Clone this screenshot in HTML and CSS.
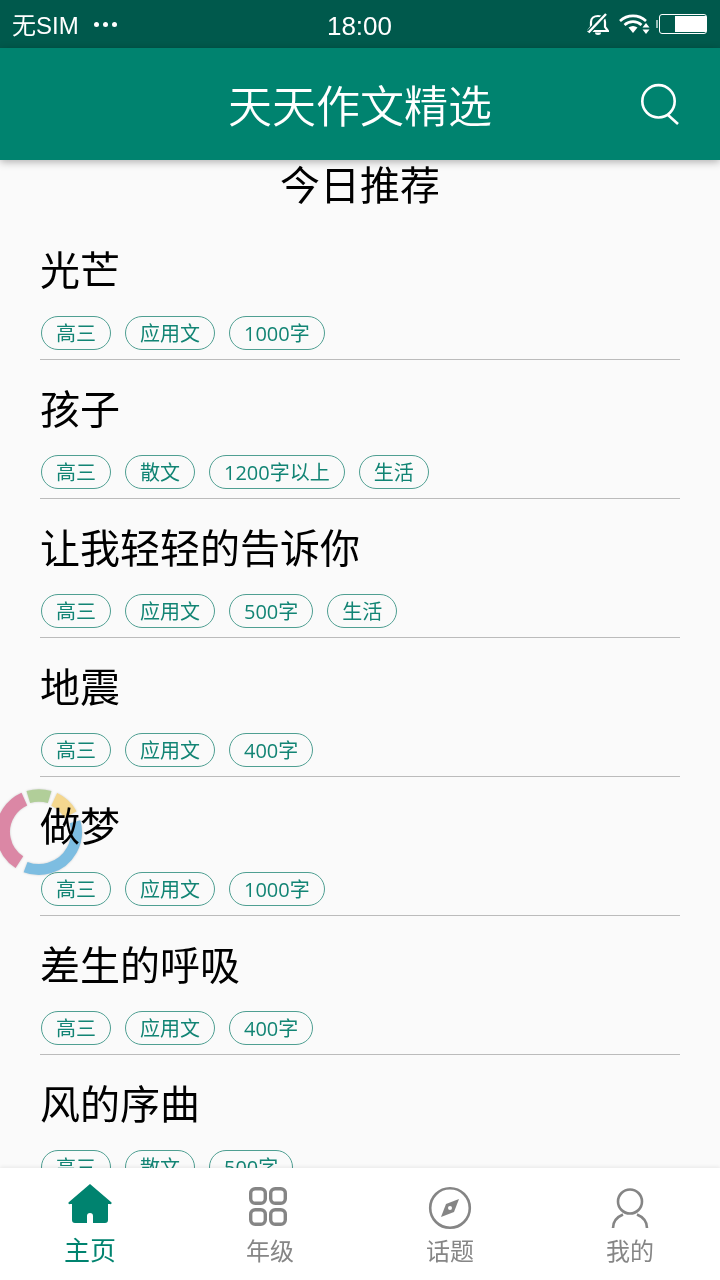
FILE: index.html
```html
<!DOCTYPE html>
<html lang="zh-CN">
<head>
<meta charset="utf-8">
<title>天天作文精选</title>
<link rel="stylesheet" href="styles.css">
</head>
<body>
<div class="page">
  <div class="status-bar">
    <div class="status-left"><span class="carrier">无SIM</span><span class="dots"><i></i><i></i><i></i></span></div>
    <div class="status-time">18:00</div>
    <div class="status-right">
      <svg class="ic-bell" viewBox="0 0 22 22"><path d="M1 18h20l-3-4V9c0-3.500-3-6-7-6S4 5.500 4 9v5z" fill="none" stroke="#fff" stroke-width="2.200"/><path d="M8 19.500h6a3 2.500 0 0 1-6 0z" fill="#fff"/><path d="M1.500 19.500 19 1" stroke="#00594c" stroke-width="5"/><path d="M1.500 19.500 19 1" stroke="#fff" stroke-width="2.400"/></svg>
      <svg class="ic-wifi" viewBox="0 0 31 20"><g fill="none" stroke="#fff" stroke-width="2.600"><path d="M1 7a19 19 0 0 1 26 0"/><path d="M5.500 11a12.500 12.500 0 0 1 17 0"/></g><path d="M9.500 13.500a8 8 0 0 1 9 0L14 19z" fill="#fff"/><path d="M27 9l3.500 4.500h-7zM27 20l3.500-4.500h-7z" fill="#fff"/></svg>
      <div class="battery-wrap"><span class="nub"></span><div class="battery"><div class="battery-fill"></div></div></div>
    </div>
  </div>
  <header class="app-header">
    <h1 class="app-title">天天作文精选</h1>
    <svg class="ic-search" viewBox="0 0 40 42"><circle cx="19.500" cy="18.300" r="16.200" fill="none" stroke="#fff" stroke-width="2.600"/><path d="M29 32l10 9" stroke="#fff" stroke-width="2.600" fill="none"/></svg>
  </header>
  <main class="content">
    <h2 class="section-title">今日推荐</h2>
    <article class="item"><h3 class="item-title">光芒</h3><div class="tags"><span class="tag">高三</span><span class="tag">应用文</span><span class="tag">1000字</span></div></article>
    <article class="item"><h3 class="item-title">孩子</h3><div class="tags"><span class="tag">高三</span><span class="tag">散文</span><span class="tag">1200字以上</span><span class="tag">生活</span></div></article>
    <article class="item"><h3 class="item-title">让我轻轻的告诉你</h3><div class="tags"><span class="tag">高三</span><span class="tag">应用文</span><span class="tag">500字</span><span class="tag">生活</span></div></article>
    <article class="item"><h3 class="item-title">地震</h3><div class="tags"><span class="tag">高三</span><span class="tag">应用文</span><span class="tag">400字</span></div></article>
    <article class="item"><h3 class="item-title">做梦</h3><div class="tags"><span class="tag">高三</span><span class="tag">应用文</span><span class="tag">1000字</span></div></article>
    <article class="item"><h3 class="item-title">差生的呼吸</h3><div class="tags"><span class="tag">高三</span><span class="tag">应用文</span><span class="tag">400字</span></div></article>
    <article class="item"><h3 class="item-title">风的序曲</h3><div class="tags"><span class="tag">高三</span><span class="tag">散文</span><span class="tag">500字</span></div></article>
  </main>
  <nav class="tabbar">
    <div class="tab active">
      <svg class="tab-icon" viewBox="0 0 44 44"><path d="M22 1 43 19a1 1 0 0 1-1 2h-2v16a3 3 0 0 1-3 3H25V33a3 3 0 0 0-6 0v7H7a3 3 0 0 1-3-3V21H2a1 1 0 0 1-1-2z" fill="#00836f"/></svg>
      <span class="tab-label">主页</span>
    </div>
    <div class="tab">
      <svg class="tab-icon" viewBox="0 0 44 44"><g fill="none" stroke="#858585" stroke-width="3.400"><rect x="2.700" y="5.700" width="14.600" height="14.600" rx="4.500"/><rect x="22.700" y="5.700" width="14.600" height="14.600" rx="4.500"/><rect x="2.700" y="26.700" width="14.600" height="14.600" rx="4.500"/><rect x="22.700" y="26.700" width="14.600" height="14.600" rx="4.500"/></g></svg>
      <span class="tab-label">年级</span>
    </div>
    <div class="tab">
      <svg class="tab-icon" viewBox="0 0 44 44"><circle cx="22" cy="25" r="19.800" fill="none" stroke="#858585" stroke-width="2.600"/><path d="M31 16 26 29 13 34 18 21z" fill="#858585"/><circle cx="22" cy="25" r="2" fill="#fff"/></svg>
      <span class="tab-label">话题</span>
    </div>
    <div class="tab">
      <svg class="tab-icon" viewBox="0 0 44 44"><g fill="none" stroke="#858585" stroke-width="2.600"><circle cx="22" cy="18.500" r="12"/><path d="M5 45c0-6 4-11 10-13.500M39 45c0-6-4-11-10-13.500"/></g></svg>
      <span class="tab-label">我的</span>
    </div>
  </nav>
  <svg class="float-ring" viewBox="-45 -45 90 90">
    <g fill="none">
      <circle r="36" stroke-width="14" pathLength="360" stroke="#e08aa8" stroke-dasharray="123 237" transform="rotate(123)"/>
      <circle r="36.500" stroke-width="12.500" pathLength="360" stroke="#b5d29c" stroke-dasharray="34 326" transform="rotate(253)"/>
      <circle r="36" stroke-width="14" pathLength="360" stroke="#f9dc92" stroke-dasharray="36 324" transform="rotate(295)"/>
      <circle r="37.500" stroke-width="11" pathLength="360" stroke="#80c1e6" stroke-dasharray="127 233" transform="rotate(344)"/>
    </g>
  </svg>
</div>
</body>
</html>
```
FILE: styles.css
```css
* { box-sizing: border-box; }
html, body { margin: 0; padding: 0; }
body {
  font-family: "Noto Sans CJK SC", "Noto Sans", sans-serif;
  background: #fafafa;
}
.page {
  position: relative;
  width: 720px;
  height: 1280px;
  display: flex;
  flex-direction: column;
  overflow: hidden;
}
.status-bar {
  height: 48px;
  flex: none;
  background: #00594c;
  color: #fff;
  display: grid;
  grid-template-columns: 1fr auto 1fr;
  align-items: center;
  padding: 0 13px 0 12px;
  font-family: "Liberation Sans", "Noto Sans CJK SC", sans-serif;
}
.status-left {
  display: flex;
  align-items: center;
  gap: 15px;
  font-size: 24px;
  line-height: 48px;
}
.carrier { line-height: 52px; height: 48px; }
.dots { display: flex; gap: 4px; }
.dots i { width: 5px; height: 5px; border-radius: 50%; background: #fff; }
.status-time { font-size: 26px; line-height: 52px; height: 48px; }
.status-right {
  display: flex;
  align-items: center;
  justify-content: flex-end;
  gap: 9px;
}
.ic-bell { width: 22px; height: 22px; margin-right: 1px; }
.ic-wifi { width: 31px; height: 20px; }
.battery-wrap { display: flex; align-items: center; gap: 1px; }
.nub { width: 2px; height: 8px; background: rgba(255,255,255,.6); margin-left: -3px; }
.battery {
  width: 48px;
  height: 20px;
  border: 1px solid #fff;
  border-radius: 3px;
  display: flex;
  justify-content: flex-end;
  padding: 1px 0;
}
.battery-fill { width: 31px; background: #fff; }
.app-header {
  position: relative;
  z-index: 2;
  height: 112px;
  flex: none;
  background: #00836f;
  box-shadow: 0 2px 8px rgba(0,0,0,.3);
  display: flex;
  align-items: center;
  justify-content: center;
}
.app-title {
  margin: 0;
  color: #fff;
  font-size: 44px;
  font-weight: 350;
  line-height: 112px;
}
.ic-search {
  position: absolute;
  right: 41px;
  top: 35px;
  width: 40px;
  height: 42px;
}
.content {
  flex: 1;
  min-height: 0;
  overflow: hidden;
}
.section-title {
  margin: 0 0 15px;
  height: 46px;
  font-size: 40px;
  font-weight: 400;
  line-height: 46px;
  text-align: center;
  color: #000;
}
.item {
  margin: 0 40px;
  padding: 21px 0 9px;
  border-bottom: 1px solid #bbbbbb;
}
.item-title {
  margin: 0 0 22px;
  height: 52px;
  font-size: 40px;
  font-weight: 400;
  line-height: 52px;
  color: #000;
}
.tags { display: flex; gap: 14px; padding-left: 1px; }
.tag {
  height: 34px;
  padding: 0 15px;
  border: 1px solid #4f9f92;
  border-radius: 17px;
  font-family: "Open Sans", "Noto Sans CJK SC", sans-serif;
  font-size: 20px;
  line-height: 33px;
  color: #128474;
}
.tag { padding: 0 14px; }
.tabbar {
  position: relative;
  z-index: 2;
  height: 112px;
  flex: none;
  background: #fff;
  box-shadow: 0 -1px 4px rgba(0,0,0,.08);
  display: grid;
  grid-template-columns: repeat(4, 1fr);
}
.tab {
  display: flex;
  flex-direction: column;
  align-items: center;
  padding-top: 15px;
  color: #868686;
}
.tab-icon { width: 44px; height: 44px; display: block; overflow: visible; }
.tab-label { font-size: 24px; line-height: 34px; margin-top: 6px; }
.tab.active { color: #00836f; }
.tab.active .tab-label { font-size: 26px; margin-top: 5px; }
.float-ring {
  position: absolute;
  left: -6px;
  top: 787px;
  width: 90px;
  height: 90px;
  z-index: 1;
  mix-blend-mode: multiply;
  filter: drop-shadow(0 0 1px rgba(0,0,0,.18));
}
```
